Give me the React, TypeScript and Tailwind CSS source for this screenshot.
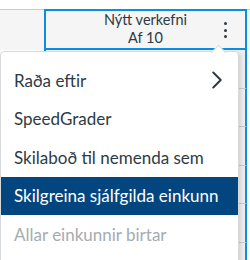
import { ChevronRight } from "lucide-react";

const items = [
  { label: "Raða eftir", sub: true },
  { label: "SpeedGrader" },
  { label: "Skilaboð til nemenda sem" },
  { label: "Skilgreina sjálfgilda einkunn", active: true },
  { label: "Allar einkunnir birtar", disabled: true },
];

export default function App() {
  return (
    <div className="relative w-[250px] h-[260px] overflow-hidden bg-white font-['Lato',sans-serif] text-[#2d3b45]">
      <div className="h-[9px]" />
      {/* header row */}
      <div className="flex h-[41px] border-t border-[#c7cdd1] bg-[#f5f5f5]">
        <div className="w-[44px]" />
        <div className="relative -mt-px w-[203px] border-2 border-[#0b8ee0] flex flex-col items-center justify-center pb-[2px] text-[14.5px] leading-[18px]">
          <span>Nýtt verkefni</span>
          <span>Af 10</span>
          <div className="absolute right-[18px] top-[11px] flex flex-col gap-[3.5px]">
            <span className="w-[3px] h-[3px] rounded-full bg-[#2d3b45]" />
            <span className="w-[3px] h-[3px] rounded-full bg-[#2d3b45]" />
            <span className="w-[3px] h-[3px] rounded-full bg-[#2d3b45]" />
          </div>
        </div>
      </div>
      {/* body rows behind the menu */}
      <div className="flex flex-col">
        {[0, 1, 2, 3, 4, 5].map((i) => (
          <div key={i} className="flex h-[38.5px]">
            <div className="w-[44px] border-b border-[#c7cdd1]" />
            <div className="w-[203px] border-x-2 border-b border-x-[#0b8ee0] border-b-[#c7cdd1] bg-[#eeeeee]" />
          </div>
        ))}
      </div>

      {/* caret */}
      <div className="absolute left-[213px] top-[47px] w-[11px] h-[11px] rotate-45 bg-white border-l border-t border-[#d7dadc] z-20" />
      {/* menu */}
      <div className="absolute left-0 top-[51px] w-[239px] h-[240px] bg-white border border-[#d7dadc] rounded-[4px] shadow-[2px_2px_4px_rgba(0,0,0,0.12)] pt-[9px] z-10">
        {items.map((it) => (
          <div
            key={it.label}
            className={
              "flex items-center justify-between h-[38.5px] pl-[13px] pr-[6px] text-[17px] whitespace-nowrap " +
              (it.active ? "bg-[#03467f] text-white" : it.disabled ? "text-[#a5acb1]" : "")
            }
          >
            <span>{it.label}</span>
            {it.sub && <ChevronRight size={30} strokeWidth={1.6} />}
          </div>
        ))}
      </div>
    </div>
  );
}
